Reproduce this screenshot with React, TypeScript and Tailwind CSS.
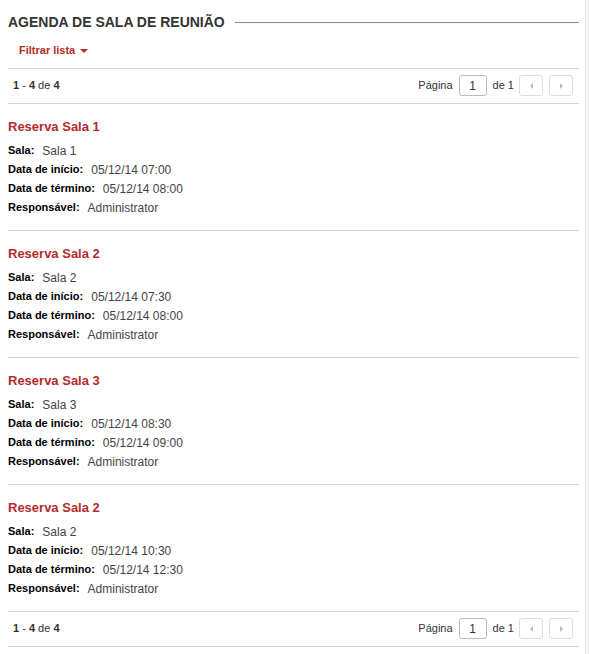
import React from 'react'

interface Reserva {
  titulo: string
  sala: string
  inicio: string
  termino: string
  responsavel: string
}

const reservas: Reserva[] = [
  { titulo: 'Reserva Sala 1', sala: 'Sala 1', inicio: '05/12/14 07:00', termino: '05/12/14 08:00', responsavel: 'Administrator' },
  { titulo: 'Reserva Sala 2', sala: 'Sala 2', inicio: '05/12/14 07:30', termino: '05/12/14 08:00', responsavel: 'Administrator' },
  { titulo: 'Reserva Sala 3', sala: 'Sala 3', inicio: '05/12/14 08:30', termino: '05/12/14 09:00', responsavel: 'Administrator' },
  { titulo: 'Reserva Sala 2', sala: 'Sala 2', inicio: '05/12/14 10:30', termino: '05/12/14 12:30', responsavel: 'Administrator' },
]

const Paginacao = () => (
  <div className="flex h-[36px] items-center justify-between border-y border-[#d4d4d4] pb-[1px] pl-[5px] pr-[6px]">
    <span className="text-[11px] text-[#333]">
      <b>1</b> - <b>4</b> de <b>4</b>
    </span>
    <div className="flex items-center text-[11px] text-[#333]">
      <span>Página</span>
      <div className="ml-[6px] flex h-[21px] w-[28px] items-center justify-center rounded-[3px] border border-[#bbb] text-[12px]">
        1
      </div>
      <span className="ml-[6px]">de 1</span>
      <div className="ml-[5px] flex h-[21px] w-[24px] items-center justify-center rounded-[3px] border border-[#ddd]">
        <span className="h-0 w-0 border-y-[3px] border-r-[3px] border-y-transparent border-r-[#bbb]" />
      </div>
      <div className="ml-[6px] flex h-[21px] w-[24px] items-center justify-center rounded-[3px] border border-[#ddd]">
        <span className="h-0 w-0 border-y-[3px] border-l-[3px] border-y-transparent border-l-[#bbb]" />
      </div>
    </div>
  </div>
)

const Campo = ({ label, valor }: { label: string; valor: string }) => (
  <div className="flex h-[19px] items-center">
    <span className="text-[11px] font-bold text-black">{label}:</span>
    <span className="ml-[8px] text-[12px] text-[#444]">{valor}</span>
  </div>
)

export default function App() {
  return (
    <div className="flex min-h-[654px] bg-white font-['Liberation_Sans',Arial,sans-serif]">
      <div className="w-[585px] pl-[8px] pr-[6px]">
        {/* Header */}
        <div className="flex h-[43px] items-center pt-[1px]">
          <h1 className="text-[14px] font-bold text-[#333]">AGENDA DE SALA DE REUNIÃO</h1>
          <div className="ml-[10px] h-px flex-1 bg-[#8a8a8a]" />
        </div>

        <div className="mb-[11px] flex h-[14px] items-center pl-[11px]">
          <span className="text-[11px] font-bold text-[#b52b2b]">Filtrar lista</span>
          <span className="ml-[5px] mt-[1px] h-0 w-0 border-x-[4px] border-t-[4px] border-x-transparent border-t-[#c0272d]" />
        </div>

        <Paginacao />

        {reservas.map((r, idx) => (
          <div key={idx} className="h-[127px] border-b border-[#d4d4d4] pt-[13px]">
            <h2 className="mb-[5px] text-[13px] font-bold leading-[19px] text-[#b52b2b]">{r.titulo}</h2>
            <Campo label="Sala" valor={r.sala} />
            <Campo label="Data de início" valor={r.inicio} />
            <Campo label="Data de término" valor={r.termino} />
            <Campo label="Responsável" valor={r.responsavel} />
          </div>
        ))}

        <div className="-mt-px">
          <Paginacao />
        </div>
      </div>
      {/* Right scroll strip */}
      <div className="w-[4px] border-l border-[#e5e5e5] bg-[#f7f7f7]" />
    </div>
  )
}
